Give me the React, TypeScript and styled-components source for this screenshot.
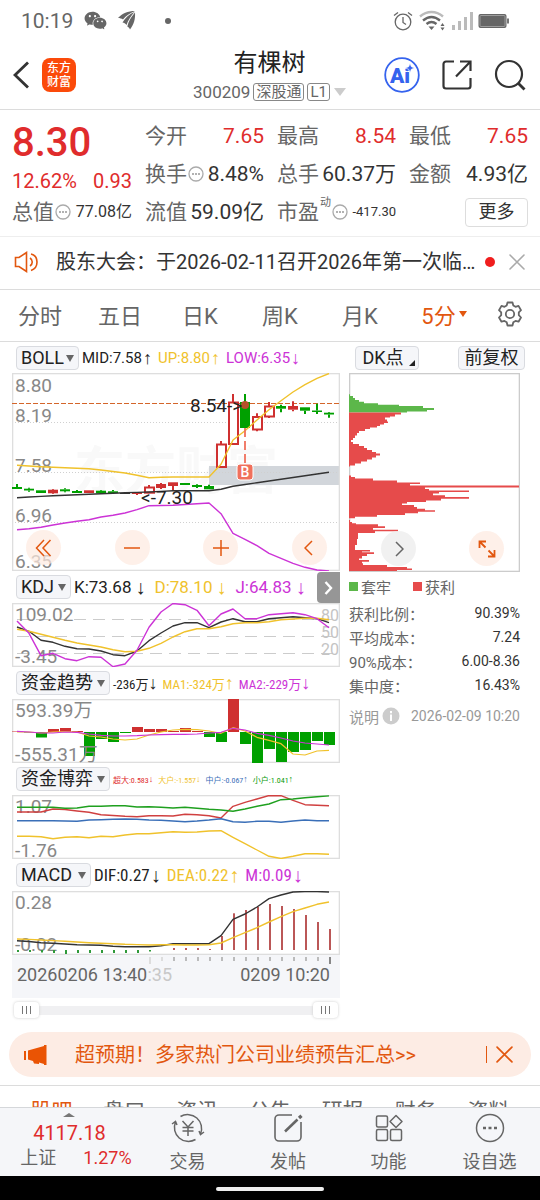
import React from "react";
import styled, { createGlobalStyle, css } from "styled-components";
import { AiFillWechat } from "react-icons/ai";

const c = {
  red: "#e02c2c",
  text: "#333",
  sub: "#666",
  faint: "#999",
  orange: "#e2570f",
  yellow: "#f0c22c",
  purple: "#cc33d6",
  green: "#0a9a0a",
  blue: "#3a6fb8",
  line: "#dcdcdc",
  frame: "#dedede",
  chip: "#f5f6f9",
};

const GlobalStyle = createGlobalStyle`
  * { box-sizing: border-box; }
  body {
    margin: 0;
    background: #fff;
    color: ${c.text};
    font-family: Roboto, "Noto Sans CJK SC", sans-serif;
  }
  button, select, input { font: inherit; color: inherit; }
  button { border: 0; padding: 0; background: none; cursor: pointer; }
  dl, dd, dt, h1, p { margin: 0; font-weight: 400; }
  svg { display: block; }
`;

const Shell = styled.div`
  display: flex;
  flex-direction: column;
  height: 100vh;
`;
const Page = styled.main`
  flex: 1;
  min-height: 0;
  overflow: hidden;
`;

/* status bar */
const StatusBar = styled.div`
  display: flex;
  align-items: center;
  height: 41px;
  padding: 0 30px 0 21px;
  color: ${c.sub};
  font-size: 21px;
`;
const StatusLeft = styled.div`
  display: flex;
  align-items: center;
  gap: 10px;
  flex: 1;
`;
const StatusRight = styled.div`
  display: flex;
  align-items: center;
  gap: 4px;
`;

/* title bar */
const Header = styled.header`
  display: grid;
  grid-template-columns: 1fr auto 1fr;
  align-items: center;
  height: 69px;
  padding: 0 14px 0 13px;
  border-bottom: 1px solid ${c.line};
`;
const HeaderSide = styled.div<{ $end?: boolean }>`
  display: flex;
  align-items: center;
  gap: ${(p) => (p.$end ? "21px" : "12px")};
  justify-content: ${(p) => (p.$end ? "flex-end" : "flex-start")};
`;
const Logo = styled.a`
  display: grid;
  place-content: center;
  width: 34px;
  height: 34px;
  border-radius: 8px;
  background: #fb4a0a;
  color: #fff;
  font-size: 12px;
  font-weight: 500;
  line-height: 14px;
  text-align: center;
  text-decoration: none;
`;
const TitleBlock = styled.div`
  display: flex;
  flex-direction: column;
  align-items: center;
  padding-top: 2px;
`;
const StockName = styled.h1`
  font-size: 24px;
  line-height: 32px;
  color: #222;
`;
const CodeRow = styled.div`
  display: flex;
  align-items: center;
  gap: 3px;
  height: 26px;
  font-size: 17px;
  color: ${c.sub};
`;
const Tag = styled.span`
  height: 18px;
  padding: 0 2px;
  border: 1px solid #888;
  border-radius: 3px;
  font-size: 15px;
  line-height: 17px;
`;
const Caret = styled.span<{ $size?: number; $color?: string }>`
  width: 0;
  height: 0;
  margin-left: 1px;
  border: ${(p) => p.$size ?? 5}px solid transparent;
  border-top: ${(p) => (p.$size ?? 5) + 2}px solid ${(p) => p.$color ?? "#ccc"};
  border-bottom: 0;
`;

/* quote */
const Quote = styled.section`
  display: grid;
  grid-template-columns: 120fr 119fr 119fr 119fr;
  column-gap: 13px;
  height: 127px;
  padding: 7px 12px 6px;
  border-bottom: 1px solid #eee;
`;
const QuoteColumn = styled.dl`
  display: grid;
  grid-template-rows: 38px 38px 38px;
`;
const PriceColumn = styled.div`
  display: grid;
  grid-template-rows: 51px 25px 38px;
  color: ${c.red};
`;
const Price = styled.div`
  font-size: 40px;
  font-weight: 500;
  line-height: 51px;
`;
const ChangeRow = styled.div`
  display: flex;
  justify-content: space-between;
  font-size: 20px;
  line-height: 26px;
`;
const Cell = styled.div`
  display: flex;
  align-items: center;
  gap: 1px;
  white-space: nowrap;
  line-height: 38px;
`;
const Label = styled.dt`
  font-size: 21px;
  color: ${c.sub};
`;
const LabelNote = styled.sup`
  align-self: flex-start;
  font-size: 11px;
  line-height: 20px;
  color: ${c.sub};
`;
const Value = styled.dd<{ $up?: boolean; $size?: number }>`
  margin-left: auto;
  font-size: ${(p) => p.$size ?? 21}px;
  color: ${(p) => (p.$up ? c.red : c.text)};
`;
const MoreButton = styled.button`
  align-self: center;
  justify-self: end;
  width: 63px;
  height: 29px;
  border: 1px solid #ddd;
  border-radius: 4px;
  font-size: 18px;
  line-height: 24px;
`;

/* notice */
const Notice = styled.section`
  display: flex;
  align-items: center;
  height: 53px;
  padding: 0 15px 2px 14px;
  border-bottom: 1px solid ${c.line};
`;
const NoticeLink = styled.a`
  flex: 1;
  min-width: 0;
  margin-left: 14px;
  overflow: hidden;
  color: ${c.text};
  font-size: 20px;
  line-height: 32px;
  text-decoration: none;
  text-overflow: ellipsis;
  white-space: nowrap;
`;
const Dot = styled.span`
  width: 10px;
  height: 10px;
  margin: 0 14px 0 8px;
  border-radius: 50%;
  background: #f01e1e;
`;

/* period tabs */
const Tabs = styled.nav`
  display: grid;
  grid-template-columns: repeat(6, 80fr) 60fr;
  height: 52px;
  padding-bottom: 3px;
  border-bottom: 1px solid ${c.line};
`;
const Tab = styled.button<{ $active?: boolean }>`
  display: flex;
  align-items: center;
  justify-content: center;
  gap: 2px;
  padding-left: ${(p) => (p.$active ? 8 : 0)}px;
  font-size: 22px;
  color: ${(p) => (p.$active ? c.orange : c.sub)};
`;

/* chart area */
const Board = styled.section`
  display: grid;
  grid-template-columns: 328fr 171fr;
  column-gap: 9px;
  padding: 0 20px 0 12px;
`;
const Column = styled.div`
  min-width: 0;
`;
const IndicatorRow = styled.div<{ $first?: boolean }>`
  position: relative;
  display: flex;
  align-items: center;
  gap: 3px;
  height: ${(p) => (p.$first ? 31 : 32)}px;
  padding-left: 4px;
  white-space: nowrap;
`;
const chipBox = css`
  height: 24px;
  border: 1px solid #d9dbe0;
  border-radius: 4px;
  background: ${c.chip};
  font-size: 18px;
  line-height: 22px;
  color: #222;
`;
const Picker = styled.label<{ $width: number }>`
  position: relative;
  flex: none;
  width: ${(p) => p.$width}px;
  height: 24px;
  &::after {
    content: "";
    position: absolute;
    right: 5px;
    top: 9px;
    border: 4px solid transparent;
    border-top: 7px solid #666;
    border-bottom: 0;
    pointer-events: none;
  }
`;
const PickerSelect = styled.select`
  ${chipBox}
  width: 100%;
  padding: 0 0 0 4px;
  appearance: none;
  outline: none;
`;
const Reading = styled.span<{ $color: string; $size: number; $narrow?: boolean }>`
  display: inline-flex;
  align-items: center;
  margin-right: 2px;
  font-size: ${(p) => p.$size}px;
  color: ${(p) => p.$color};
  ${(p) =>
    p.$narrow &&
    css`
      font-family: "Roboto Condensed", "Liberation Sans Narrow", Roboto, "Noto Sans CJK SC", sans-serif;
    `}
`;
const Arrow = styled.span<{ $size: number; $pad: number }>`
  padding: 0 ${(p) => p.$pad}px;
  font-family: "Liberation Sans", sans-serif;
  font-size: ${(p) => p.$size}px;
  line-height: 20px;
`;
const ChartFrame = styled.div`
  position: relative;
`;
const ChartSvg = styled.svg`
  width: 100%;
  height: auto;
  font-family: Roboto, "Noto Sans CJK SC", sans-serif;
`;
const FloatRow = styled.div<{ $side?: boolean }>`
  position: absolute;
  left: 0;
  right: 0;
  bottom: 6px;
  display: flex;
  justify-content: space-between;
  padding: ${(p) => (p.$side ? "0 16px 0 32px" : "0 13px 0 14px")};
`;
const RoundButton = styled.button<{ $plain?: boolean }>`
  display: grid;
  place-items: center;
  width: 35px;
  height: 35px;
  border-radius: 50%;
  background: ${(p) => (p.$plain ? "rgba(238,238,238,.8)" : "rgba(254,234,224,.7)")};
  color: ${(p) => (p.$plain ? c.sub : c.orange)};
`;
const Pager = styled.button`
  position: absolute;
  right: 0;
  top: 1px;
  display: grid;
  place-items: center;
  width: 23px;
  height: 31px;
  border-radius: 4px 0 0 4px;
  background: #969696;
`;
const TimeAxis = styled.div`
  height: 43px;
  background: ${c.chip};
`;
const RangeBar = styled.div`
  position: relative;
  height: 24px;
  &::before {
    content: "";
    position: absolute;
    left: 6px;
    right: 6px;
    top: 8px;
    height: 9px;
    border-radius: 4px;
    background: #f0f0f2;
  }
`;
const RangeInput = styled.input`
  position: absolute;
  left: 0;
  top: 0;
  width: 100%;
  height: 24px;
  margin: 0;
  padding: 0 2px;
  appearance: none;
  background: none;
  pointer-events: none;
  &::-webkit-slider-thumb {
    appearance: none;
    width: 25px;
    height: 16px;
    border-radius: 4px;
    box-shadow: 0 0 3px #ccc;
    pointer-events: auto;
    background:
      linear-gradient(#777, #777) 8px 4px / 1px 8px no-repeat,
      linear-gradient(#777, #777) 12px 4px / 1px 8px no-repeat,
      linear-gradient(#777, #777) 16px 4px / 1px 8px no-repeat,
      #fff;
  }
`;

/* chip distribution column */
const SideHead = styled.div`
  display: flex;
  align-items: center;
  justify-content: space-between;
  height: 31px;
  margin: 0 -5px 0 6px;
`;
const ChipButton = styled.button<{ $width: number; $corner?: boolean }>`
  ${chipBox}
  position: relative;
  width: ${(p) => p.$width}px;
  padding-right: ${(p) => (p.$corner ? 8 : 0)}px;
  line-height: 20px;
  ${(p) =>
    p.$corner &&
    css`
      &::after {
        content: "";
        position: absolute;
        right: 3px;
        bottom: 3px;
        border-left: 6px solid transparent;
        border-bottom: 6px solid #222;
      }
    `}
`;
const Legend = styled.div`
  display: flex;
  align-items: center;
  gap: 22px;
  height: 29px;
  font-size: 15px;
  color: ${c.sub};
`;
const LegendItem = styled.span<{ $color: string }>`
  display: flex;
  align-items: center;
  gap: 3px;
  &::before {
    content: "";
    width: 9px;
    height: 9px;
    background: ${(p) => p.$color};
  }
`;
const Stats = styled.dl`
  display: grid;
  grid-auto-rows: 24px;
`;
const StatRow = styled.div`
  display: flex;
  align-items: center;
  justify-content: space-between;
  font-size: 15px;
  color: ${c.sub};
  dd {
    font-size: 14px;
    color: ${c.text};
  }
`;
const Explain = styled.div`
  display: flex;
  align-items: center;
  gap: 3px;
  height: 38px;
  font-size: 15px;
  color: ${c.faint};
  time {
    margin-left: auto;
    font-size: 14px;
  }
`;

/* promo and lower tabs */
const Promo = styled.aside`
  display: flex;
  align-items: center;
  height: 45px;
  margin: 10px 9px 8px;
  padding: 0 18px 0 14px;
  border-radius: 23px;
  background: #fdece4;
  color: ${c.orange};
`;
const PromoLink = styled.a`
  flex: 1;
  margin-left: 28px;
  padding-bottom: 2px;
  color: inherit;
  font-size: 20px;
  text-decoration: none;
`;
const PromoClose = styled.button`
  display: flex;
  align-items: center;
  padding-left: 9px;
  border-left: 1px solid ${c.orange};
`;
const SectionTabs = styled.nav`
  display: grid;
  grid-template-columns: repeat(7, 1fr);
  padding: 10px 15px;
  border-top: 1px solid ${c.line};
`;
const SectionTab = styled.a<{ $active?: boolean }>`
  color: ${(p) => (p.$active ? c.orange : c.sub)};
  font-size: 21px;
  line-height: 31px;
  text-align: center;
  text-decoration: none;
`;

/* bottom bar */
const BottomBar = styled.footer`
  display: grid;
  grid-template-columns: 137fr 101fr 100fr 101fr 101fr;
  height: 69px;
  border-top: 1px solid #d5d7da;
  background: ${c.chip};
  color: ${c.sub};
`;
const IndexBox = styled.button`
  position: relative;
  display: flex;
  flex-direction: column;
  align-items: center;
  padding: 13px 0 0 2px;
  font-size: 20px;
  color: ${c.red};
  &::before {
    content: "";
    position: absolute;
    top: 5px;
    left: 63px;
    border: 6px solid transparent;
    border-bottom: 4px solid #777;
    border-top: 0;
  }
`;
const IndexRow = styled.span`
  display: flex;
  gap: 27px;
  padding-left: 13px;
  font-size: 18px;
  line-height: 25px;
`;
const IndexName = styled.span`
  color: ${c.sub};
`;
const NavItem = styled.button`
  display: flex;
  flex-direction: column;
  align-items: center;
  padding-top: 4px;
  font-size: 18px;
  line-height: 35px;
`;
const HomeBar = styled.div`
  display: flex;
  justify-content: center;
  height: 24px;
  padding-top: 11px;
  background: #000;
  &::before {
    content: "";
    width: 20%;
    height: 4px;
    border-radius: 2px;
    background: #eee;
  }
`;

/* ---------- chart data ---------- */
const RED = "#cf3030";
const GREEN = "#00a000";
const STEP = 12;
const xAt = (i: number) => 5 + STEP * i;
const line = (ys: number[]) => ys.map((y, i) => `${xAt(i)},${y}`).join(" ");

type Candle = { t: number; b: number; h?: number; l?: number; k: "r" | "g" | "o" | "d" };
const candles: Candle[] = [
  { t: 114, b: 116, h: 111, k: "g" },
  { t: 115.7, b: 117.5, h: 114.7, l: 118.7, k: "g" },
  { t: 117.3, b: 120, k: "g" },
  { t: 116.7, b: 120.3, h: 116, l: 121, k: "r" },
  { t: 116.3, b: 118.3, h: 115.3, l: 119.3, k: "g" },
  { t: 118, b: 120, h: 117, k: "g" },
  { t: 117.3, b: 120, k: "r" },
  { t: 117.7, b: 120.3, h: 117, l: 121, k: "g" },
  { t: 118.3, b: 120, h: 117, k: "g" },
  { t: 120, b: 121, k: "d" },
  { t: 119.5, b: 121, l: 122, k: "r" },
  { t: 114, b: 119.7, h: 112, k: "o" },
  { t: 111, b: 115, h: 110, l: 116, k: "r" },
  { t: 109.3, b: 113, l: 117.7, k: "r" },
  { t: 110, b: 112, k: "g" },
  { t: 112, b: 114, h: 111.3, l: 115, k: "g" },
  { t: 113, b: 116.3, h: 111.7, k: "g" },
  { t: 71, b: 94, h: 68, k: "o" },
  { t: 29, b: 71, h: 21, k: "o" },
  { t: 29, b: 55, h: 21, k: "g" },
  { t: 43.5, b: 56.5, h: 40.3, l: 58.3, k: "o" },
  { t: 33, b: 43.5, h: 29, l: 45, k: "o" },
  { t: 33, b: 35.7, h: 31.7, l: 39.3, k: "g" },
  { t: 33, b: 36.7, h: 28.3, l: 38.3, k: "r" },
  { t: 34.3, b: 37.7, l: 41, k: "g" },
  { t: 37.5, b: 39, h: 30.7, l: 41, k: "g" },
  { t: 39.7, b: 41.5, h: 39, l: 44.7, k: "g" },
];
const bollUp = [92.3, 93, 93.7, 94.3, 94.7, 95.2, 95.7, 97, 98.5, 100, 102.3, 104.7, 104.3, 104, 104, 104, 104, 91.3, 67, 57.7, 47, 36.7, 27.7, 19, 11.7, 5.3, 0.5];
const bollMid = [124.7, 124, 123.4, 122.8, 122.3, 121.7, 121.2, 120.7, 120.3, 119.8, 119.4, 119, 118.4, 117.8, 117.7, 117.7, 117.7, 116.3, 113.3, 111.5, 109.7, 108, 106.3, 104.5, 102.7, 101, 99.3];
const bollLow = [156.7, 155.7, 154.3, 152, 150, 148.3, 146.7, 144, 142.3, 140, 136.7, 132.7, 132.5, 132.3, 131.5, 130.7, 130, 140.7, 160.3, 166.3, 172.7, 180.3, 185.3, 190.3, 194.3, 197, 198];

const kdjJ = [18, 30.3, 52.7, 50.3, 55.7, 57.7, 53.7, 54.3, 63.7, 61, 47.3, 24.3, 9, 0.5, 1.7, 7.3, 22.7, 11, 6, 15.7, 15.7, 11.7, 10.7, 9.7, 11.7, 15.7, 24.7];
const kdjK = [24, 28.3, 37.3, 39.3, 43.3, 45.7, 46, 48, 51.7, 52.7, 48, 37.7, 30, 23, 19.7, 19.7, 24.7, 19, 15.7, 18.7, 18.7, 15.7, 14.7, 13.7, 14.7, 15.7, 19.7];
const kdjD = [26.3, 28.3, 31.3, 34.3, 37.3, 40, 42, 44, 46.7, 48.7, 48.3, 45.3, 40.3, 34, 28.7, 25.7, 25.7, 23.7, 20.7, 19.7, 19.7, 18.7, 16.7, 16, 15.3, 15.3, 16.7];

const flow = [0.5, -0.5, -5.5, 3, 4, 1, -24, -7, -10, -1, 5, 3, 3, 1, 4, 1, -5, -10, 33, -12, -31, -17, -30, -20, -18, -9, -13];
const flowMa1 = [33, 33, 34, 33, 32.5, 33, 37, 38, 40, 41, 40, 36, 33, 31, 30.3, 30.7, 32, 34.3, 28.7, 32, 38.3, 41.3, 44.7, 55, 56, 52, 51.3];
const flowMa2 = [32.3, 33, 34, 34, 33, 33.3, 35, 36.3, 37, 37, 36.7, 36, 35.7, 35.3, 35.3, 35, 34, 33.3, 29.3, 31, 34.3, 36.3, 39, 42, 44, 45, 46];

const gameHuge = [17, 17, 17, 14, 14.5, 16, 17.3, 19.7, 20.5, 21.3, 21.7, 20.7, 20.7, 21, 19.3, 19.7, 20.7, 23, 11.3, 7.3, 4, 0.5, 0.7, 5.3, 9.7, 10.3, 10.7];
const gameSmall = [12.3, 12.3, 12.3, 12.3, 13.3, 13, 11.3, 11.3, 10.7, 10.7, 12, 11.7, 12.3, 13, 12.3, 13.3, 14.3, 15, 16.3, 14, 11.3, 9, 4.7, 4, 2.7, 1.7, 0.9];
const gameMid = [25.7, 25.7, 25.7, 25.7, 26, 26.3, 25, 24.7, 24.3, 24, 24.3, 25, 25.3, 26, 26.7, 26, 25, 23.7, 26.7, 27.3, 26.3, 26.3, 27.3, 26, 25, 25.7, 25.7];
const gameBig = [41.3, 41.3, 41.7, 43.7, 42.3, 41.7, 42.7, 41.3, 41.7, 40, 38.7, 38.7, 37.7, 36.7, 37.3, 37, 36, 35.7, 42.3, 48.7, 55, 61.3, 63.5, 61.3, 58.7, 58.7, 59.3];

const macdDif = [49.7, 50.5, 51.7, 52.3, 53, 53.7, 54, 54.3, 55.3, 55.7, 55.7, 55.7, 54.7, 52.7, 52.7, 52.7, 52.7, 44.7, 28.3, 23, 16, 7.7, 4, 1, 0.5, 0.5, 1];
const macdDea = [48, 48.4, 49, 49.6, 50.3, 51, 51.7, 52.2, 52.7, 53.3, 53.6, 54, 53.7, 53.7, 54, 54, 53.7, 52, 46.7, 41.7, 36.7, 31, 25.7, 20.7, 17, 13.3, 11];
const macdBars = [-2, -2, -2.5, -3, -4, -3, -3, -3, -3, -3, -3, -1.5, 0, 2, 2, 2, 1, 14, 36.7, 40, 43, 46, 44, 41, 35, 28, 21];

/* each entry: [top of the step, length of the bar] */
const trapped: [number, number][] = [[21.3, 1], [23, 4], [25, 6], [27, 10], [28.7, 15], [30.3, 29], [31.7, 50], [33, 74], [35, 85], [37, 78], [38.5, 58], [39.5, 0]];
const profit: [number, number][] = [
  [39.5, 52], [41.5, 46], [43.5, 41], [44.5, 36], [46.5, 38], [48.5, 39], [50, 35], [51.5, 31], [53, 28], [54.5, 21], [56, 16], [58, 10], [60, 8], [62.5, 6], [65, 4], [67, 2], [69, 4],
  [71, 10], [73, 15], [75, 18], [77, 23], [79, 27], [80.5, 31], [82.5, 27], [84.5, 23], [86.5, 18], [88.5, 12], [90.5, 6], [92.5, 1], [93.5, 0], [102.5, 2], [104, 6], [105.5, 24],
  [107.5, 48], [109.5, 71], [111, 61], [112.5, 170], [114.5, 76], [116, 80], [117.5, 120], [119, 90], [120.5, 84], [122.3, 96], [124, 120], [125.7, 92], [127.5, 77], [129, 58], [130.5, 53], [132, 65], [134, 68], [135.7, 76],
  [137.3, 86], [138.7, 69], [140.3, 56], [142, 28], [143.7, 6], [145.3, 0], [147, 1], [149, 3], [150.3, 7], [151.3, 29], [153.3, 36], [155, 24], [156.8, 49], [158.3, 26],
  [160, 9], [166, 8], [172, 6], [177, 21], [178.5, 13], [179.3, 25], [181, 18], [183, 13], [185.5, 10], [187, 20], [188.7, 13], [190.3, 14], [192, 38], [194, 58], [195.5, 63], [197, 48], [198, 0],
];
const steps = (rows: [number, number][]) =>
  `M0 ${rows[0][0]}` +
  rows.map(([y, w], i) => `H${w}V${rows[i + 1] ? rows[i + 1][0] : y}`).join("") +
  "H0Z";

/* ---------- small pieces ---------- */
const MoreDots = () => (
  <svg width="16" height="16" viewBox="0 0 16 16" fill="none" stroke="#aaa">
    <circle cx="8" cy="8" r="7" strokeWidth="1.3" />
    <path d="M4 8h2M7 8h2M10 8h2" strokeWidth="1.6" stroke="#999" />
  </svg>
);

const Cross = ({ size, color, width }: { size: number; color: string; width: number }) => (
  <svg width={size} height={size} viewBox="0 0 16 16" stroke={color} strokeWidth={width} strokeLinecap="round">
    <path d="M1 1l14 14M15 1L1 15" />
  </svg>
);

const Frame = ({ h }: { h: number }) => (
  <rect x="0.5" y="0.5" width="327" height={h - 1} fill="none" stroke={c.frame} strokeWidth="1.6" />
);

const AxisText = ({ x = 3, y, children, fill = "#888" }: { x?: number; y: number; children: string; fill?: string }) => (
  <text x={x} y={y} fontSize="19" fill={fill}>
    {children}
  </text>
);

const Series = ({ ys, color, w = 1.4 }: { ys: number[]; color: string; w?: number }) => (
  <polyline points={line(ys)} fill="none" stroke={color} strokeWidth={w} strokeLinejoin="round" />
);

const IndicatorPicker = ({ name, options, width }: { name: string; options: string[]; width: number }) => (
  <Picker $width={width}>
    <PickerSelect aria-label={name} defaultValue={options[0]}>
      {options.map((o) => (
        <option key={o}>{o}</option>
      ))}
    </PickerSelect>
  </Picker>
);

type ReadingData = [text: string, dir: "↑" | "↓", color: string];
type ReadingsProps = { items: ReadingData[]; size: number; arrow: number; pad?: number; narrow?: boolean };
const Readings = ({ items, size, arrow, pad = 0, narrow }: ReadingsProps) => (
  <>
    {items.map(([text, dir, color]) => (
      <Reading key={text} $color={color} $size={size} $narrow={narrow}>
        {text}
        <Arrow $size={arrow} $pad={pad}>
          {dir}
        </Arrow>
      </Reading>
    ))}
  </>
);

/* ---------- charts ---------- */
const BollChart = () => (
  <ChartSvg viewBox="0 0 328 198" role="img" aria-label="BOLL">
    <text x="62" y="116" fontSize="51" fontWeight="700" fill="#f9f9f9">
      东方财富
    </text>
    <rect x="197" y="93" width="130" height="19" fill="#d2d6db" />
    <g stroke="#d0d0d0" strokeDasharray="1 2">
      <path d="M0 49.5H327M0 99.5H327M0 149.5H327" />
    </g>
    <Frame h={198} />
    <path d="M0 30.5H327" stroke="#d4652a" strokeWidth="1.2" strokeDasharray="5 2" />
    <AxisText y={19}>8.80</AxisText>
    <AxisText y={49}>8.19</AxisText>
    <AxisText y={99}>7.58</AxisText>
    <AxisText y={149}>6.96</AxisText>
    <AxisText y={195}>6.35</AxisText>
    {candles.map((d, i) => {
      const color = d.k === "g" ? GREEN : d.k === "d" ? "#333" : RED;
      const x = xAt(i);
      return (
        <g key={i} stroke={color} strokeWidth="2">
          {d.h !== undefined && <path d={`M${x} ${d.h}V${d.t}`} />}
          {d.l !== undefined && <path d={`M${x} ${d.b}V${d.l}`} />}
          {d.k === "o" ? (
            <rect x={x - 4} y={d.t + 0.5} width="9" height={d.b - d.t - 0.5} fill="#fff" />
          ) : (
            <rect x={x - 5} y={d.t} width="10" height={d.b - d.t} fill={color} stroke="none" />
          )}
        </g>
      );
    })}
    <Series ys={bollUp} color={c.yellow} />
    <Series ys={bollMid} color="#333" />
    <Series ys={bollLow} color={c.purple} />
    <path d="M233 55V91" stroke="#f0705c" strokeWidth="1.8" strokeDasharray="9 4" />
    <circle cx="233" cy="32" r="4" fill="#b5522a" />
    <rect x="225" y="91" width="16" height="16" rx="3" fill="#f0705c" stroke="#fff" />
    <text x="233" y="104" fontSize="14" fontWeight="500" fill="#fff" textAnchor="middle">
      B
    </text>
    <AxisText x={178} y={39} fill="#222">
      {"8.54->"}
    </AxisText>
    <AxisText x={129} y={131} fill="#222">
      {"<-7.30"}
    </AxisText>
  </ChartSvg>
);

const KdjChart = () => (
  <ChartSvg viewBox="0 0 328 64" role="img" aria-label="KDJ">
    <path d="M5 16.5H327M5 33.5H327M5 50.5H327" stroke="#ccc" strokeDasharray="12 7" />
    <Frame h={64} />
    <AxisText y={18}>109.02</AxisText>
    <AxisText y={60}>-3.45</AxisText>
    <g fontSize="16" fill="#c4c4c4" textAnchor="end">
      <text x="327" y="18">80</text>
      <text x="327" y="35">50</text>
      <text x="327" y="52">20</text>
    </g>
    <Series ys={kdjK} color="#333" />
    <Series ys={kdjD} color={c.yellow} />
    <Series ys={kdjJ} color={c.purple} />
  </ChartSvg>
);

const FlowChart = () => (
  <ChartSvg viewBox="0 0 328 64" role="img" aria-label="资金趋势">
    <Frame h={64} />
    {flow.map((v, i) => (
      <rect key={i} x={xAt(i) - 5} y={v > 0 ? 33 - v : 33} width="11" height={Math.abs(v)} fill={v > 0 ? RED : GREEN} />
    ))}
    <Series ys={flowMa1} color={c.yellow} w={1.2} />
    <Series ys={flowMa2} color={c.purple} w={1.2} />
    <AxisText y={18}>593.39万</AxisText>
    <AxisText y={62}>-555.31万</AxisText>
  </ChartSvg>
);

const GameChart = () => (
  <ChartSvg viewBox="0 0 328 64" role="img" aria-label="资金博弈">
    <Frame h={64} />
    <AxisText y={18}>1.07</AxisText>
    <AxisText y={62}>-1.76</AxisText>
    <Series ys={gameHuge} color="#d04040" />
    <Series ys={gameSmall} color="#1fa01f" />
    <Series ys={gameMid} color={c.blue} />
    <Series ys={gameBig} color={c.yellow} />
  </ChartSvg>
);

const MacdChart = () => (
  <ChartSvg viewBox="0 0 328 64" role="img" aria-label="MACD">
    <Frame h={64} />
    <AxisText y={18}>0.28</AxisText>
    <AxisText y={60}>-0.02</AxisText>
    {macdBars.map((v, i) => (
      <rect key={i} x={xAt(i)} y={v > 0 ? 59 - v : 59} width="2" height={Math.abs(v)} fill={v > 0 ? "#bb5757" : "#2f9a3a"} />
    ))}
    <Series ys={macdDif} color="#333" />
    <Series ys={macdDea} color={c.yellow} />
  </ChartSvg>
);

const AxisChart = () => (
  <ChartSvg viewBox="0 0 328 43" role="img" aria-label="时间">
    {macdBars.map((_, i) =>
      i > 10 ? (
        <rect
          key={i}
          x={xAt(i)}
          y="2"
          width="2"
          height={i === 26 || i === 11 ? 7 : 4}
          fill={i === 26 ? "#888" : i < 13 ? "#ddd" : "#bbb"}
        />
      ) : null
    )}
    <g fontSize="18">
      <text x="5" y="26" fill="#666">20260206 13:40</text>
      <text x="160" y="26" fill="#c8c8c8" textAnchor="end">:35</text>
      <text x="318" y="26" fill="#666" textAnchor="end">0209 10:20</text>
    </g>
  </ChartSvg>
);

const ChipChart = () => (
  <ChartSvg viewBox="0 0 171 199" role="img" aria-label="筹码分布">
    <rect x="0.5" y="0.5" width="170" height="198" fill="none" stroke="#ccc" strokeWidth="1.6" />
    <path d={steps(trapped)} fill="#5cb74a" />
    <path d={steps(profit)} fill="#e64b4b" />
  </ChartSvg>
);

/* ---------- page ---------- */
const stats = [
  ["获利比例：", "90.39%"],
  ["平均成本：", "7.24"],
  ["90%成本：", "6.00-8.36"],
  ["集中度：", "16.43%"],
];

export default function App() {
  return (
    <Shell>
      <GlobalStyle />
      <StatusBar>
        <StatusLeft>
          <span>10:19</span>
          <AiFillWechat size={25} />
          <svg width="18" height="19" viewBox="0 0 18 19" fill="#666">
            <path d="M0 7C4 2.500 10 0 17 0c-5 2-9.500 5-12 8.500C3.500 7.500 2 7 0 7z" />
            <path d="M4.500 11.500C7 7 11.500 3 16.500 1 13 5 10 9 8.500 14c-1-1.500-2.500-2.200-4-2.500z" />
            <path d="M9.300 15.500C10.500 10.500 13 6 17 1.500c.5 6-1 12-5 17-.5-1.500-1.500-2.500-2.700-3z" />
          </svg>
          <svg width="36" height="8" viewBox="0 0 36 8" fill="#666">
            <circle cx="22" cy="4" r="3" />
          </svg>
        </StatusLeft>
        <StatusRight>
          <svg width="20" height="20" viewBox="0 0 20 20" fill="none" stroke="#666" strokeWidth="1.300">
            <circle cx="10" cy="11" r="7.800" />
            <path d="M10 6v5.500l3 2M1 4.500L5 1.500M19 4.500l-4-3" />
          </svg>
          <svg width="30" height="22" viewBox="0 0 30 22" fill="none" strokeWidth="2.400">
            <path d="M3 6.500c7-6 16-6 23 0" stroke="#bbb" />
            <path d="M6 10.500c5.500-4.500 11.500-4.500 17 0M9.500 14c3.500-2.800 6.500-2.800 10 0" stroke="#666" />
            <path d="M11.500 16.500h6l-3 3.500z" fill="#666" />
            <path d="M23.500 16l2-3 2 3zM23.500 17.500l2 3 2-3z" fill="#666" />
          </svg>
          <svg width="23" height="20" viewBox="0 0 23 20" fill="#bbb">
            <rect x="1" y="14" width="3" height="5" />
            <rect x="7" y="10" width="3" height="9" />
            <rect x="13" y="6" width="3" height="13" />
            <rect x="19" y="1" width="3" height="18" />
          </svg>
          <svg width="32" height="16" viewBox="0 0 32 16">
            <rect x="0.500" y="1" width="28" height="14" rx="2" fill="#666" />
            <rect x="2" y="2.500" width="25" height="11" rx="1" fill="none" stroke="#aaa" strokeWidth="0.800" />
            <rect x="29" y="5.500" width="2" height="5" fill="#777" />
          </svg>
        </StatusRight>
      </StatusBar>

      <Header>
        <HeaderSide>
          <button aria-label="返回">
            <svg width="17" height="28" viewBox="0 0 17 28" fill="none" stroke="#333" strokeWidth="2.800">
              <path d="M15 1.500L2 14l13 12.500" />
            </svg>
          </button>
          <Logo href="#">
            东方
            <br />
            财富
          </Logo>
        </HeaderSide>
        <TitleBlock>
          <StockName>有棵树</StockName>
          <CodeRow>
            300209<Tag>深股通</Tag>
            <Tag>L1</Tag>
            <Caret $size={6} />
          </CodeRow>
        </TitleBlock>
        <HeaderSide $end>
          <button aria-label="AI">
            <svg width="36" height="36" viewBox="0 0 36 36">
              <circle cx="18" cy="18" r="16.800" fill="#fff" stroke="#3563ee" strokeWidth="1.800" />
              <text x="6" y="26" fontFamily="Roboto, sans-serif" fontSize="21" fontWeight="900" fill="#3563ee">
                Ai
              </text>
              <path d="M26 6.500l1.300 3.200 3.200 1.300-3.200 1.300L26 15.500l-1.300-3.200-3.200-1.300 3.200-1.300z" fill="#3563ee" stroke="#fff" strokeWidth="0.600" />
            </svg>
          </button>
          <button aria-label="分享">
            <svg width="32" height="32" viewBox="0 0 32 32" fill="none" stroke="#333" strokeWidth="2.200">
              <path d="M13 2.500H5a2.500 2.500 0 0 0-2.500 2.500v22A2.500 2.500 0 0 0 5 29.500h22a2.500 2.500 0 0 0 2.500-2.500V19M19 2.500h10.500V12M29.500 2.500L15 17.500" />
            </svg>
          </button>
          <button aria-label="搜索">
            <svg width="32" height="32" viewBox="0 0 32 32" fill="none" stroke="#333" strokeWidth="2.200">
              <circle cx="15" cy="15" r="13" />
              <path d="M24 24l6.500 6.500" strokeWidth="2.800" />
            </svg>
          </button>
        </HeaderSide>
      </Header>

      <Page>
        <Quote>
          <PriceColumn>
            <Price>8.30</Price>
            <ChangeRow>
              <span>12.62%</span>
              <span>0.93</span>
            </ChangeRow>
            <Cell as="dl">
              <Label>总值</Label>
              <MoreDots />
              <Value $size={16}>77.08亿</Value>
            </Cell>
          </PriceColumn>
          <QuoteColumn>
            <Cell>
              <Label>今开</Label>
              <Value $up>7.65</Value>
            </Cell>
            <Cell>
              <Label>换手</Label>
              <MoreDots />
              <Value>8.48%</Value>
            </Cell>
            <Cell>
              <Label>流值</Label>
              <Value>59.09亿</Value>
            </Cell>
          </QuoteColumn>
          <QuoteColumn>
            <Cell>
              <Label>最高</Label>
              <Value $up>8.54</Value>
            </Cell>
            <Cell>
              <Label>总手</Label>
              <Value>60.37万</Value>
            </Cell>
            <Cell>
              <Label>市盈</Label>
              <LabelNote>动</LabelNote>
              <MoreDots />
              <Value $size={13}>-417.30</Value>
            </Cell>
          </QuoteColumn>
          <QuoteColumn as="div">
            <Cell as="dl">
              <Label>最低</Label>
              <Value $up>7.65</Value>
            </Cell>
            <Cell as="dl">
              <Label>金额</Label>
              <Value>4.93亿</Value>
            </Cell>
            <MoreButton>更多</MoreButton>
          </QuoteColumn>
        </Quote>

        <Notice>
          <svg width="28" height="24" viewBox="0 0 28 24" fill="none" stroke={c.orange} strokeWidth="1.600">
            <path d="M1.500 7.500v9h3.500l7.500 5V2.500l-7.500 5zM16 8c3 2 3 6 0 8M17 4c8 2 8 14 0 16.500" />
          </svg>
          <NoticeLink href="#">股东大会：于2026-02-11召开2026年第一次临时股东大会</NoticeLink>
          <Dot />
          <button aria-label="关闭">
            <Cross size={16} color="#aaa" width={1.6} />
          </button>
        </Notice>

        <Tabs>
          <Tab>分时</Tab>
          <Tab>五日</Tab>
          <Tab>日K</Tab>
          <Tab>周K</Tab>
          <Tab>月K</Tab>
          <Tab $active>
            5分
            <Caret $size={4} $color={c.orange} />
          </Tab>
          <Tab aria-label="设置">
            <svg width="26" height="26" viewBox="0 0 26 26" fill="none" stroke="#666" strokeWidth="1.800" strokeLinejoin="round">
              <path d="M10.500 1.500h5l.8 3 2.200 1.300 3-.9 2.500 4.300-2.200 2.200v2.800L24 16.500l-2.500 4.200-3-.8-2.200 1.300-.8 3.300h-5l-.8-3.300-2.200-1.300-3 .8L2 16.500l2.200-2.300v-2.800L2 9.200l2.500-4.300 3 .9 2.200-1.300z" />
              <circle cx="13" cy="13" r="4.200" />
            </svg>
          </Tab>
        </Tabs>

        <Board>
          <Column>
            <IndicatorRow $first>
              <IndicatorPicker name="主图指标" options={["BOLL", "MA"]} width={63} />
              <Readings
                size={15}
                arrow={18}
                pad={1}
                items={[
                  ["MID:7.58", "↑", "#222"],
                  ["UP:8.80", "↑", c.yellow],
                  ["LOW:6.35", "↓", c.purple],
                ]}
              />
            </IndicatorRow>
            <ChartFrame>
              <BollChart />
              <FloatRow>
                <RoundButton aria-label="最早">
                  <svg width="17" height="18" viewBox="0 0 17 18" fill="none" stroke="currentColor" strokeWidth="1.500">
                    <path d="M9 1L1.500 9 9 17M15.500 1L8 9l7.500 8" />
                  </svg>
                </RoundButton>
                <RoundButton aria-label="缩小">
                  <svg width="18" height="18" viewBox="0 0 18 18" stroke="currentColor" strokeWidth="1.500">
                    <path d="M1 9h16" />
                  </svg>
                </RoundButton>
                <RoundButton aria-label="放大">
                  <svg width="18" height="18" viewBox="0 0 18 18" stroke="currentColor" strokeWidth="1.500">
                    <path d="M1 9h16M9 1v16" />
                  </svg>
                </RoundButton>
                <RoundButton aria-label="向前">
                  <svg width="10" height="16" viewBox="0 0 10 16" fill="none" stroke="currentColor" strokeWidth="1.500">
                    <path d="M8 1L1 8l7 7" />
                  </svg>
                </RoundButton>
              </FloatRow>
            </ChartFrame>

            <IndicatorRow>
              <IndicatorPicker name="副图一" options={["KDJ"]} width={55} />
              <Readings
                size={17}
                arrow={20}
                pad={4}
                items={[
                  ["K:73.68", "↓", "#222"],
                  ["D:78.10", "↓", c.yellow],
                  ["J:64.83", "↓", c.purple],
                ]}
              />
              <Pager aria-label="下一组">
                <svg width="9" height="14" viewBox="0 0 9 14" fill="none" stroke="#fff" strokeWidth="2.400">
                  <path d="M1.500 1l5.500 6-5.500 6" />
                </svg>
              </Pager>
            </IndicatorRow>
            <KdjChart />

            <IndicatorRow>
              <IndicatorPicker name="副图二" options={["资金趋势"]} width={94} />
              <Readings
                size={13}
                arrow={18}
                narrow
                items={[
                  ["-236万", "↓", "#222"],
                  ["MA1:-324万", "↑", c.yellow],
                  ["MA2:-229万", "↓", c.purple],
                ]}
              />
            </IndicatorRow>
            <FlowChart />

            <IndicatorRow>
              <IndicatorPicker name="副图三" options={["资金博弈"]} width={94} />
              <Readings
                size={8}
                arrow={9}
                narrow
                items={[
                  ["超大:0.583", "↓", c.red],
                  ["大户:-1.557", "↓", c.yellow],
                  ["中户:-0.067", "↑", c.blue],
                  ["小户:1.041", "↑", c.green],
                ]}
              />
            </IndicatorRow>
            <GameChart />

            <IndicatorRow>
              <IndicatorPicker name="副图四" options={["MACD"]} width={75} />
              <Readings
                size={17}
                arrow={20}
                pad={1}
                narrow
                items={[
                  ["DIF:0.27", "↓", "#222"],
                  ["DEA:0.22", "↑", c.yellow],
                  ["M:0.09", "↓", c.purple],
                ]}
              />
            </IndicatorRow>
            <MacdChart />
            <TimeAxis>
              <AxisChart />
            </TimeAxis>
            <RangeBar>
              <RangeInput type="range" aria-label="起始时间" min={0} max={100} defaultValue={0} />
              <RangeInput type="range" aria-label="结束时间" min={0} max={100} defaultValue={100} />
            </RangeBar>
          </Column>

          <Column>
            <SideHead>
              <ChipButton $width={64} $corner>
                DK点
              </ChipButton>
              <ChipButton $width={67}>前复权</ChipButton>
            </SideHead>
            <ChartFrame>
              <ChipChart />
              <FloatRow $side>
                <RoundButton $plain aria-label="向后">
                  <svg width="10" height="16" viewBox="0 0 10 16" fill="none" stroke="currentColor" strokeWidth="1.500">
                    <path d="M2 1l7 7-7 7" />
                  </svg>
                </RoundButton>
                <RoundButton aria-label="全屏">
                  <svg width="18" height="18" viewBox="0 0 18 18" fill="none" stroke="currentColor" strokeWidth="1.800">
                    <path d="M1.500 8V1.500H8M1.500 1.500l6 6M16.500 10v6.500H10M16.500 16.500l-6-6" />
                  </svg>
                </RoundButton>
              </FloatRow>
            </ChartFrame>
            <Legend>
              <LegendItem $color="#5cb74a">套牢</LegendItem>
              <LegendItem $color="#e64b4b">获利</LegendItem>
            </Legend>
            <Stats>
              {stats.map(([label, value]) => (
                <StatRow key={label}>
                  <dt>{label}</dt>
                  <dd>{value}</dd>
                </StatRow>
              ))}
            </Stats>
            <Explain>
              说明
              <svg width="18" height="18" viewBox="0 0 18 18">
                <circle cx="9" cy="9" r="8.500" fill="#ccc" />
                <path d="M9 4v2.200M9 7.500V14" stroke="#fff" strokeWidth="2" />
              </svg>
              <time>2026-02-09 10:20</time>
            </Explain>
          </Column>
        </Board>

        <Promo>
          <svg width="24" height="22" viewBox="0 0 24 22" fill="#ea5404">
            <path d="M1 7h2v9H1zM5 6.500L21 2V1h2.500v20H21v-1l-5-1.500V20l-5-.5-1-2.500-5-1.500z" />
          </svg>
          <PromoLink href="#">{"超预期！多家热门公司业绩预告汇总>>"}</PromoLink>
          <PromoClose aria-label="关闭">
            <Cross size={17} color={c.orange} width={1.6} />
          </PromoClose>
        </Promo>

        <SectionTabs>
          <SectionTab href="#" $active>
            股吧
          </SectionTab>
          <SectionTab href="#">盘口</SectionTab>
          <SectionTab href="#">资讯</SectionTab>
          <SectionTab href="#">公告</SectionTab>
          <SectionTab href="#">研报</SectionTab>
          <SectionTab href="#">财务</SectionTab>
          <SectionTab href="#">资料</SectionTab>
        </SectionTabs>
      </Page>

      <BottomBar>
        <IndexBox>
          4117.18
          <IndexRow>
            <IndexName>上证</IndexName>
            1.27%
          </IndexRow>
        </IndexBox>
        <NavItem>
          <svg width="34" height="32" viewBox="0 0 34 32" fill="none" stroke="#666" strokeWidth="1.500">
            <path d="M9.500 4.500A14 14 0 0 1 29.500 22M24.500 27.500A14 14 0 0 1 4.500 10M1 12l3.500-2.500L6 13M33 20l-3.500 2.500L28 19" />
            <path d="M11.500 9l5.500 6 5.500-6M17 15v9M11.500 15.500h11M11.500 19h11" />
          </svg>
          交易
        </NavItem>
        <NavItem>
          <svg width="32" height="32" viewBox="0 0 32 32" fill="none" stroke="#666" strokeWidth="1.600">
            <path d="M20 3H7a4 4 0 0 0-4 4v18a4 4 0 0 0 4 4h18a4 4 0 0 0 4-4V10" />
            <path d="M13 19.500L25.500 7.500" strokeWidth="2.600" />
            <path d="M27 6l2.500-2.300" strokeWidth="3.200" />
          </svg>
          发帖
        </NavItem>
        <NavItem>
          <svg width="32" height="32" viewBox="0 0 32 32" fill="none" stroke="#666" strokeWidth="1.500">
            <rect x="3.500" y="4" width="11" height="11" rx="1.500" />
            <rect x="3.500" y="17.500" width="11" height="11" rx="1.500" />
            <rect x="17.500" y="17.500" width="11" height="11" rx="1.500" />
            <path d="M23 3.500l6 6-6 6-6-6z" strokeLinejoin="round" />
          </svg>
          功能
        </NavItem>
        <NavItem>
          <svg width="32" height="32" viewBox="0 0 32 32" fill="none" stroke="#666" strokeWidth="1.500">
            <circle cx="16" cy="16" r="13.500" />
            <path d="M9 16h3M14.500 16h3M20 16h3" strokeWidth="2.600" />
          </svg>
          设自选
        </NavItem>
      </BottomBar>
      <HomeBar />
    </Shell>
  );
}
